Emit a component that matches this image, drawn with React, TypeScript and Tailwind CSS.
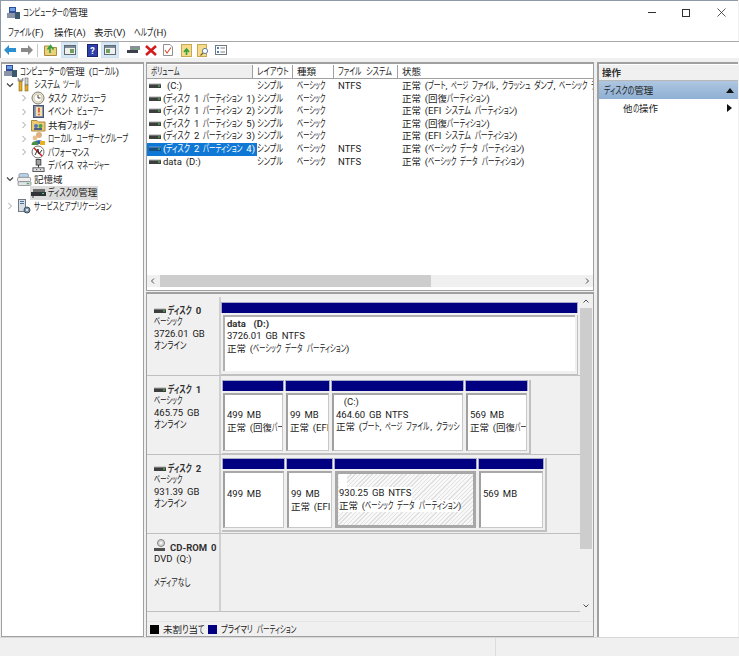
import React, { useLayoutEffect, useRef } from "react";

const font = "font-['Roboto','Noto_Sans_CJK_JP',sans-serif] [font-feature-settings:'palt'] [word-spacing:1.5px] text-[9.5px] leading-[13px] text-[#1a1a1a]";

const SMALL = "ァィゥェォッャュョーぁぃぅぇぉっゃゅょ";

function Kana({ text }: { text: string }) {
  const inner = useRef<HTMLSpanElement>(null);
  const width = Array.from(text).reduce((s, c) => s + (SMALL.includes(c) ? 4.6 : 6.4), 0);
  useLayoutEffect(() => {
    const el = inner.current;
    if (el) el.style.transform = `scaleX(${width / el.offsetWidth})`;
  }, [width]);
  return (
    <span className="inline-block whitespace-nowrap" style={{ width }}>
      <span ref={inner} className="inline-block origin-left text-[10px]">{text}</span>
    </span>
  );
}

function T({ children }: { children: string }) {
  const parts = children.split(/([\u3040-\u309f\u30a0-\u30ff]+)/);
  return (
    <>
      {parts.map((p, i) =>
        i % 2 === 1 ? <Kana key={i} text={p} /> : <span key={i} className="whitespace-pre">{p}</span>
      )}
    </>
  );
}

function Drive({ selected }: { selected?: boolean }) {
  return (
    <svg width="12" height="6" viewBox="0 0 12 6" className="shrink-0">
      <rect x="0" y="1" width="12" height="4" fill={selected ? "#1c4f80" : "#3c3f3c"} />
      <rect x="0" y="0.5" width="12" height="1" fill={selected ? "#6aa0d0" : "#a9aca9"} />
      <rect x="9" y="2.5" width="2" height="1" fill="#5fd06a" />
    </svg>
  );
}

function Chevron({ open }: { open?: boolean }) {
  return open ? (
    <svg width="8" height="8" viewBox="0 0 8 8"><path d="M1 2.5 L4 5.5 L7 2.5" fill="none" stroke="#404040" strokeWidth="1.2" /></svg>
  ) : (
    <svg width="8" height="8" viewBox="0 0 8 8"><path d="M2.5 1 L5.5 4 L2.5 7" fill="none" stroke="#a0a0a0" strokeWidth="1" /></svg>
  );
}

function TreeIcon({ kind }: { kind: string }) {
  const c = "shrink-0";
  switch (kind) {
    case "root":
      return <svg width="15" height="14" viewBox="0 0 15 14" className={c}><rect x="1" y="7" width="11" height="5" fill="#8a93a8" /><rect x="3" y="1" width="7" height="6" fill="#2f4d9a" /><rect x="4" y="2" width="5" height="3" fill="#6fa0e0" /><rect x="9" y="6" width="5" height="7" fill="#3b5a6e" /></svg>;
    case "tools":
      return <svg width="14" height="15" viewBox="0 0 14 15" className={c}><rect x="2" y="4" width="3" height="10" fill="#e8b020" stroke="#6a5010" strokeWidth="0.5" /><path d="M1 1 V4 H6 V1 L4.5 3 H2.5Z" fill="#c8c8c8" stroke="#505050" strokeWidth="0.5" /><rect x="8" y="1" width="3" height="7" fill="#d0d0d0" stroke="#505050" strokeWidth="0.5" /><rect x="8" y="8" width="3" height="6" fill="#e8b020" stroke="#6a5010" strokeWidth="0.5" /></svg>;
    case "clock":
      return <svg width="14" height="14" viewBox="0 0 14 14" className={c}><circle cx="7" cy="7" r="6" fill="#e8e4d0" stroke="#808080" /><circle cx="7" cy="7" r="4" fill="#fff" stroke="#c0b070" strokeWidth="0.6" /><path d="M7 4 V7 H9.5" stroke="#404040" fill="none" /></svg>;
    case "event":
      return <svg width="11" height="13" viewBox="0 0 12 14" className={c}><rect x="0.5" y="0.5" width="11" height="13" fill="#7a8aa8" stroke="#404a60" /><rect x="3" y="2" width="7" height="10" fill="#f0e0b0" /><path d="M6.5 3 V8 M6.5 9.5 V11" stroke="#d03020" strokeWidth="1.5" /></svg>;
    case "share":
      return <svg width="15" height="14" viewBox="0 0 15 14" className={c}><path d="M0.5 2.5 H6 L7.5 4 H14 V13 H0.5Z" fill="#eecb72" stroke="#a88a40" /><circle cx="5" cy="8" r="2" fill="#4a78c0" /><circle cx="9.5" cy="8" r="2" fill="#48a050" /><rect x="3" y="10" width="8" height="2" fill="#506080" /></svg>;
    case "users":
      return <svg width="15" height="15" viewBox="0 0 15 15" className={c}><circle cx="8" cy="4" r="3" fill="#e0b080" /><path d="M3 13 C3 8 13 8 13 13Z" fill="#2f5fb0" /><circle cx="4" cy="7" r="2.4" fill="#e8c090" /><path d="M0.5 14 C0.5 9 7.5 9 7.5 14Z" fill="#489048" /><rect x="9" y="10" width="5" height="4" fill="#e8b020" /></svg>;
    case "perf":
      return <svg width="14" height="14" viewBox="0 0 14 14" className={c}><circle cx="7" cy="7" r="6" fill="#fff" stroke="#707070" /><path d="M3 3 L11 11" stroke="#d02020" strokeWidth="1.6" /><path d="M4 10 L7 4 L8 9 L11 5" stroke="#303030" fill="none" /></svg>;
    case "device":
      return <svg width="13" height="13" viewBox="0 0 13 14" className={c}><rect x="4" y="0.5" width="5" height="6" fill="#a0a0a0" stroke="#404040" /><rect x="6" y="6.5" width="1" height="3" fill="#303030" /><rect x="0.5" y="9.5" width="12" height="4" fill="#e0e0e0" stroke="#505050" /><rect x="4" y="11" width="1" height="1" fill="#202020" /><rect x="8" y="11" width="1" height="1" fill="#202020" /></svg>;
    case "storage":
      return <svg width="17" height="13" viewBox="0 0 17 15" className={c}><rect x="2" y="0.5" width="11" height="5" rx="2" fill="#b8d0e8" stroke="#8a94a0" /><rect x="0.5" y="5" width="15" height="5" rx="1.5" fill="#eeeeee" stroke="#8a8a8a" /><rect x="1" y="10" width="15" height="4.5" rx="1.5" fill="#e0e6ec" stroke="#8a8a8a" /><rect x="11" y="11.5" width="3" height="1.5" fill="#40b050" /></svg>;
    case "disk":
      return <svg width="15" height="10" viewBox="0 0 15 10" className={c}><rect x="2" y="1" width="12" height="3" fill="#6a6a6a" /><rect x="0" y="4" width="15" height="4" fill="#30343a" /><rect x="11" y="5" width="2" height="1" fill="#50d060" /><rect x="1" y="8" width="2" height="2" fill="#909090" /></svg>;
    default:
      return <svg width="13" height="15" viewBox="0 0 13 15" className={c}><rect x="0.5" y="0.5" width="7" height="12" fill="#d8dee6" stroke="#707880" /><rect x="2" y="2" width="4" height="1" fill="#5070a0" /><rect x="2" y="4" width="4" height="1" fill="#5070a0" /><circle cx="9" cy="11" r="3" fill="#7890a8" stroke="#405060" /><circle cx="9" cy="11" r="1" fill="#fff" /></svg>;
  }
}

const tree = [
  { t: "コンピューターの管理 (ローカル)", i: "root", x: 0, h: "h-[14px]" },
  { t: "システム ツール", i: "tools", x: 4, c: "open", h: "h-[13.5px]" },
  { t: "タスク スケジューラ", i: "clock", x: 18, c: "closed", h: "h-[13.5px]" },
  { t: "イベント ビューアー", i: "event", x: 18, c: "closed", h: "h-[13.5px]" },
  { t: "共有フォルダー", i: "share", x: 18, c: "closed", h: "h-[13.5px]" },
  { t: "ローカル ユーザーとグループ", i: "users", x: 18, c: "closed", h: "h-[13.5px]" },
  { t: "パフォーマンス", i: "perf", x: 18, c: "closed", h: "h-[13.5px]" },
  { t: "デバイス マネージャー", i: "device", x: 18, c: "none", h: "h-[13.5px]" },
  { t: "記憶域", i: "storage", x: 4, c: "open", h: "h-[13.5px]" },
  { t: "ディスクの管理", i: "disk", x: 18, c: "none", sel: true, h: "h-[13.5px]" },
  { t: "サービスとアプリケーション", i: "service", x: 4, c: "closed", h: "h-[13.5px]" },
];

const rows = [
  ["(C:)", "シンプル", "ベーシック", "NTFS", "正常 (ブート, ページ ファイル, クラッシュ ダンプ, ベーシック デ"],
  ["(ディスク 1 パーティション 1)", "シンプル", "ベーシック", "", "正常 (回復パーティション)"],
  ["(ディスク 1 パーティション 2)", "シンプル", "ベーシック", "", "正常 (EFI システム パーティション)"],
  ["(ディスク 1 パーティション 5)", "シンプル", "ベーシック", "", "正常 (回復パーティション)"],
  ["(ディスク 2 パーティション 3)", "シンプル", "ベーシック", "", "正常 (EFI システム パーティション)"],
  ["(ディスク 2 パーティション 4)", "シンプル", "ベーシック", "NTFS", "正常 (ベーシック データ パーティション)"],
  ["data (D:)", "シンプル", "ベーシック", "NTFS", "正常 (ベーシック データ パーティション)"],
];

function Partition({ w, lines, hatch, pt = "pt-[14px]", h }: { w: string; lines: string[]; hatch?: boolean; pt?: string; h: string }) {
  const look = hatch
    ? "border-[3px] border-[#a8a8a8] px-[1px] bg-[repeating-linear-gradient(135deg,#e0e0e0_0,#e0e0e0_1px,#f8f8f8_1px,#f8f8f8_3px)]"
    : "border-l-2 border-t-2 border-r border-b border-l-[#a0a0a0] border-t-[#a8a8a8] border-r-[#c8c8c8] border-b-[#c8c8c8] px-[2px] bg-white";
  return (
    <div className={`${w} shrink-0 flex flex-col`}>
      <div className="h-[11px] bg-[#000080] border border-[#a8a8c8] border-b-0" />
      <div className={`${h} mt-[1px] bg-[#f0f0f0] p-[1px]`}>
        <div className={`h-full overflow-hidden whitespace-nowrap ${pt} ${look}`}>
          {hatch && <div className="h-[13px] w-[8px] bg-white" />}
          {lines.map((l, i) => (
            <div key={i} className="h-[12.5px] leading-[12.5px] flex"><span className={hatch ? "bg-white" : ""}><T>{l}</T></span></div>
          ))}
        </div>
      </div>
    </div>
  );
}

function DiskLabel({ name, lines, cd }: { name: string; lines: string[]; cd?: boolean }) {
  return (
    <div className="w-[74px] shrink-0 h-full bg-[#f0f0f0] border-r-2 border-r-[#d0d0d0] pl-[7px] pt-[7px] whitespace-nowrap">
      <div className="flex items-center gap-[2px] h-[13px] font-bold mb-[-1px]">
        {cd ? (
          <svg width="13" height="14" viewBox="0 0 13 14" className="mr-[1px] mt-[-3px]"><circle cx="7" cy="4" r="3.5" fill="#d8d8d8" stroke="#808080" /><circle cx="7" cy="4" r="1" fill="#fff" /><rect x="0" y="9" width="11" height="3" fill="#505050" /></svg>
        ) : (
          <Drive />
        )}
        <span className="text-[#303030]"><T>{name}</T></span>
      </div>
      {lines.map((l, i) => (
        <div key={i} className="h-[12.2px] leading-[12.2px]">{l ? <T>{l}</T> : "\u00a0"}</div>
      ))}
    </div>
  );
}

export default function App() {
  return (
    <div className={`${font} w-[739px] h-[656px] overflow-hidden bg-[#f0f0f0] flex flex-col`}>
      <div className="bg-white border-t border-l border-[#8e9aa8] h-[41px] shrink-0 border-b-0 mr-[1px]">
        <div className="h-[22px] flex items-center pl-[5px] pt-[1px]">
          <TreeIcon kind="root" />
          <span className="ml-[2px]"><T>コンピューターの管理</T></span>
          <div className="ml-auto flex items-center">
            <div className="w-[8px] h-px bg-[#303030] mr-[26px]" />
            <div className="w-[8px] h-[8px] border border-[#303030] mr-[27px]" />
            <svg width="9" height="9" viewBox="0 0 9 9" className="mr-[12px]"><path d="M0.5 0.5 L8.5 8.5 M8.5 0.5 L0.5 8.5" stroke="#303030" strokeWidth="0.8" /></svg>
          </div>
        </div>
        <div className="flex items-center h-[18px] pl-[7px]">
          <span className="w-[46px]"><T>ファイル(F)</T></span>
          <span className="w-[40px]"><T>操作(A)</T></span>
          <span className="w-[40px]">表示(V)</span>
          <span><T>ヘルプ(H)</T></span>
        </div>
      </div>
      <div className="h-[17px] shrink-0 bg-white border-t border-[#a8a8a8] border-l border-l-[#8e9aa8] flex items-center pl-[3px]">
        <svg width="12" height="10" viewBox="0 0 12 10"><path d="M0 5 L5 0 V3 H12 V7 H5 V10Z" fill="#2e8fd0" /></svg>
        <svg width="12" height="10" viewBox="0 0 12 10" className="ml-[5px]"><path d="M12 5 L7 0 V3 H0 V7 H7 V10Z" fill="#8a8a8a" /></svg>
        <div className="w-px h-[13px] bg-[#c8c8c8] ml-[4px]" />
        <svg width="13" height="12" viewBox="0 0 13 12" className="ml-[6px]"><path d="M0.5 2 H5 L6 3.5 H12.5 V11.5 H0.5Z" fill="#edd07a" stroke="#a88a40" /><path d="M6 9 V3 M3.5 5.5 L6.5 1.5 L9.5 5.5" stroke="#30a040" strokeWidth="1.6" fill="none" /></svg>
        <div className="w-[17px] h-[16px] bg-[#d6e8f6] border border-[#cce0f2] flex items-center justify-center ml-[4px]">
          <svg width="12" height="10" viewBox="0 0 12 10"><rect x="0.5" y="0.5" width="11" height="9" fill="#f0f0f0" stroke="#606870" /><rect x="1" y="1" width="10" height="2" fill="#7a8a9a" /><rect x="6" y="4" width="4" height="4" fill="#70a060" /></svg>
        </div>
        <svg width="11" height="13" viewBox="0 0 11 13" className="ml-[9px]"><rect x="0.5" y="0.5" width="10" height="12" fill="#2e3fa8" stroke="#1a2470" /><text x="5.5" y="10" fontSize="9" fill="#fff" textAnchor="middle" fontWeight="bold">?</text></svg>
        <div className="w-[18px] h-[16px] bg-[#d6e8f6] border border-[#cce0f2] flex items-center justify-center ml-[3px]">
          <svg width="12" height="10" viewBox="0 0 12 10"><rect x="0.5" y="0.5" width="11" height="9" fill="#f0f0f0" stroke="#606870" /><rect x="1" y="1" width="10" height="2" fill="#7a8a9a" /><rect x="2" y="4" width="4" height="4" fill="#70a060" /></svg>
        </div>
        <svg width="13" height="10" viewBox="0 0 13 10" className="ml-[8px]"><rect x="3" y="1" width="10" height="4" fill="#8a9098" /><rect x="0" y="5" width="11" height="3" fill="#3c4048" /><rect x="8" y="3" width="3" height="1" fill="#50c060" /></svg>
        <svg width="12" height="11" viewBox="0 0 12 11" className="ml-[5px]"><path d="M1 1 L11 10 M11 1 L1 10" stroke="#d01c1c" strokeWidth="2.6" /></svg>
        <svg width="10" height="12" viewBox="0 0 10 12" className="ml-[6px]"><path d="M0.5 0.5 H7 L9.5 3 V11.5 H0.5Z" fill="#fff" stroke="#909090" /><path d="M2 6 L4 9 L8 3.5" stroke="#d05030" strokeWidth="1.1" fill="none" /></svg>
        <svg width="11" height="13" viewBox="0 0 11 13" className="ml-[8px]"><rect x="0.5" y="0.5" width="10" height="12" fill="#f6dc8a" stroke="#c8a850" /><path d="M5.5 11 V6 M3 8 L5.5 5 L8 8" stroke="#30a040" strokeWidth="1.6" fill="none" /></svg>
        <svg width="13" height="13" viewBox="0 0 13 13" className="ml-[5px]"><rect x="0.5" y="0.5" width="9" height="12" fill="#f6dc8a" stroke="#c8a850" /><circle cx="8" cy="7" r="2.6" fill="#fff" stroke="#6080a0" /><path d="M6 9 L3.5 11.5" stroke="#806030" strokeWidth="1.2" /></svg>
        <svg width="12" height="10" viewBox="0 0 12 10" className="ml-[5px]"><rect x="0.5" y="0.5" width="11" height="9" fill="#fff" stroke="#707880" /><rect x="2" y="2" width="2" height="2" fill="#5080c0" /><rect x="2" y="6" width="2" height="2" fill="#5080c0" /><path d="M5.5 3 H10 M5.5 7 H10" stroke="#808080" /></svg>
      </div>
      <div className="flex-1 min-h-0 flex pt-[4px]">
        {/* tree */}
        <div className="w-[143px] ml-[1px] shrink-0 bg-white border border-[#a0a0a0] border-t-2 overflow-hidden">
          {tree.map((n) => (
            <div key={n.t} className={`${n.h} flex items-center whitespace-nowrap`} style={{ paddingLeft: n.x }}>
              {n.c && <span className="w-[8px] mr-[2px] flex shrink-0">{n.c !== "none" && <Chevron open={n.c === "open"} />}</span>}
              <span className={`flex items-center h-full ${n.sel ? "bg-[#dcdcdc]" : ""}`}>
                <span className="w-[16px] flex shrink-0 justify-center"><TreeIcon kind={n.i} /></span>
                <span className="ml-[2px] pr-[1px]"><T>{n.t}</T></span>
              </span>
            </div>
          ))}
        </div>
        {/* middle */}
        <div className="w-[448px] ml-[2px] shrink-0 flex flex-col h-[575px]">
          <div className="h-[229px] shrink-0 bg-white border border-[#a0a0a0] border-t-2 flex flex-col overflow-hidden">
            <div className="h-[14px] shrink-0 flex bg-white border-b border-[#a0a0a0] whitespace-nowrap mt-[1px]">
              <div className="w-[106px] pl-[4px] bg-[#efefef] border-r border-[#a0a0a0]"><T>ボリューム</T></div>
              <div className="w-[40px] pl-[4px] border-r border-[#a0a0a0]"><T>レイアウト</T></div>
              <div className="w-[41px] pl-[4px] border-r border-[#a0a0a0]">種類</div>
              <div className="w-[64px] pl-[4px] border-r border-[#a0a0a0]"><T>ファイル システム</T></div>
              <div className="flex-1 pl-[4px]">状態</div>
            </div>
            <div className="flex-1 min-h-0 pt-[1px] overflow-hidden">
              {rows.map((r, i) => (
                <div key={i} className="h-[12.6px] leading-[12.6px] flex whitespace-nowrap">
                  <div className="w-[106px] flex items-center">
                    <div className={`flex items-center h-[12.6px] pl-[2px] pr-[2px] gap-[2px] ${i === 5 ? "bg-[#0f78d4] text-white" : ""}`}>
                      <Drive selected={i === 5} />
                      <span className={i === 0 ? "ml-[4px]" : ""}><T>{r[0]}</T></span>
                    </div>
                  </div>
                  <div className="w-[40px] pl-[4px]"><T>{r[1]}</T></div>
                  <div className="w-[41px] pl-[4px]"><T>{r[2]}</T></div>
                  <div className="w-[64px] pl-[4px]">{r[3]}</div>
                  <div className="pl-[4px] w-[195px] overflow-hidden"><T>{r[4]}</T></div>
                </div>
              ))}
            </div>
            <div className="h-[12px] mb-[3px] shrink-0 bg-[#f0f0f0] flex items-center">
              <svg width="12" height="8" viewBox="0 0 12 8"><path d="M7 1.5 L4.5 4 L7 6.5" stroke="#505050" fill="none" /></svg>
              <div className="w-[271px] h-full bg-[#cdcdcd] ml-[1px]" />
              <div className="flex-1" />
              <svg width="12" height="8" viewBox="0 0 12 8"><path d="M5 1.5 L7.5 4 L5 6.5" stroke="#505050" fill="none" /></svg>
            </div>
          </div>
          <div className="flex-1 min-h-0 mt-[1px] border border-[#a0a0a0] border-t-2 bg-[#f0f0f0] flex flex-col">
            <div className="flex-1 min-h-0 flex">
              <div className="flex-1 min-w-0 pt-[3px]">
                <div className="h-[79px] flex border-b border-[#c0c0c0]">
                  <DiskLabel name="ディスク 0" lines={["ベーシック", "3726.01 GB", "オンライン"]} />
                  <div className="pt-[5px]">
                    <div className="w-[357px] h-[11px] bg-[#000080] border border-[#a8a8c8] border-b-0" />
                    <div className="w-[357px] h-[60px] mt-[2px] p-[2px] pb-[3px] pt-0 border-r border-b border-[#c0c0c0]">
                      <div className="h-full bg-white border-l-2 border-t-2 border-[#b0b0b0] pl-[2px]">
                        <div className="font-bold h-[13px] text-[#303030]">data&nbsp; (D:)</div>
                        <div className="h-[12.5px] leading-[12.5px]">3726.01 GB NTFS</div>
                        <div className="h-[12.5px] leading-[12.5px]"><T>正常 (ベーシック データ パーティション)</T></div>
                      </div>
                    </div>
                  </div>
                </div>
                <div className="h-[79px] flex border-b border-[#c0c0c0]">
                  <DiskLabel name="ディスク 1" lines={["ベーシック", "465.75 GB", "オンライン"]} />
                  <div className="pt-[4px] pl-[1px] flex gap-[1px] items-start">
                    <div className="flex gap-[1px] border-r-2 border-b-2 border-[#c0c0c0] pr-[1px] pb-[1px]">
                      <Partition w="w-[62px]" h="h-[60px]" lines={["499 MB", "正常 (回復パー"]} />
                      <Partition w="w-[45px]" h="h-[60px]" lines={["99 MB", "正常 (EFI"]} />
                      <Partition w="w-[133px]" h="h-[60px]" pt="pt-[1px]" lines={["\u00a0 (C:)", "464.60 GB NTFS", "正常 (ブート, ページ ファイル, クラッシ"]} />
                      <Partition w="w-[63px]" h="h-[60px]" lines={["569 MB", "正常 (回復パー"]} />
                    </div>
                  </div>
                </div>
                <div className="h-[79px] flex border-b border-[#c0c0c0]">
                  <DiskLabel name="ディスク 2" lines={["ベーシック", "931.39 GB", "オンライン"]} />
                  <div className="pt-[3px] pl-[1px]">
                    <div className="flex gap-[1px] border-r-2 border-b-2 border-[#c0c0c0] pr-[1px] pb-[1px]">
                      <Partition w="w-[63px]" h="h-[59px]" pt="pt-[15px]" lines={["499 MB"]} />
                      <Partition w="w-[47px]" h="h-[59px]" pt="pt-[15px]" lines={["99 MB", "正常 (EFI"]} />
                      <Partition w="w-[143px]" h="h-[59px]" pt="pt-0" hatch lines={["930.25 GB NTFS", "正常 (ベーシック データ パーティション)"]} />
                      <Partition w="w-[66px]" h="h-[59px]" pt="pt-[15px]" lines={["569 MB"]} />
                    </div>
                  </div>
                </div>
                <div className="h-[78px] flex border-b border-[#c0c0c0]">
                  <DiskLabel cd name="CD-ROM 0" lines={["DVD (Q:)", "", "メディアなし"]} />
                </div>
              </div>
              <div className="w-[12px] shrink-0 flex flex-col items-center mr-[1px]">
                <div className="h-[14px] flex items-center"><svg width="8" height="6" viewBox="0 0 8 6"><path d="M1.5 4.5 L4 2 L6.5 4.5" stroke="#505050" fill="none" /></svg></div>
                <div className="w-full h-[241px] bg-[#cdcdcd]" />
                <div className="flex-1" />
                <div className="h-[14px] flex items-center mb-[8px]"><svg width="8" height="6" viewBox="0 0 8 6"><path d="M1.5 1.5 L4 4 L6.5 1.5" stroke="#505050" fill="none" /></svg></div>
              </div>
            </div>
            <div className="h-[15px] shrink-0 border-t border-[#e4e4e4] flex items-center pl-[3px]">
              <span className="w-[9px] h-[9px] bg-black" />
              <span className="ml-[4px]"><T>未割り当て</T></span>
              <span className="w-[9px] h-[9px] bg-[#000080] ml-[4px]" />
              <span className="ml-[4px]"><T>プライマリ パーティション</T></span>
            </div>
          </div>
        </div>
        {/* actions */}
        <div className="w-[141px] ml-[3px] shrink-0 h-[575px] bg-white border-l-2 border-t-2 border-[#a0a0a0] flex flex-col">
          <div className="h-[16px] mt-[1px] bg-[#f0f0f0] border-b border-[#b8b8b8] pl-[3px] font-bold text-[#303030] flex items-center">操作</div>
          <div className="h-[18px] bg-[linear-gradient(#aec6e0,#8fb0d4)] pl-[5px] flex items-center justify-between pr-[4px]">
            <span><T>ディスクの管理</T></span>
            <svg width="8" height="5" viewBox="0 0 8 5"><path d="M0 5 L4 0 L8 5Z" fill="#101010" /></svg>
          </div>
          <div className="h-[18px] pl-[24px] pr-[6px] flex items-center justify-between">
            <span><T>他の操作</T></span>
            <svg width="5" height="8" viewBox="0 0 5 8"><path d="M0 0 L5 4 L0 8Z" fill="#101010" /></svg>
          </div>
        </div>
      </div>
      <div className="h-[19px] shrink-0 flex border-t border-[#d8d8d8]">
        <div className="w-[496px] border-r border-[#dcdcdc]" />
      </div>
    </div>
  );
}
